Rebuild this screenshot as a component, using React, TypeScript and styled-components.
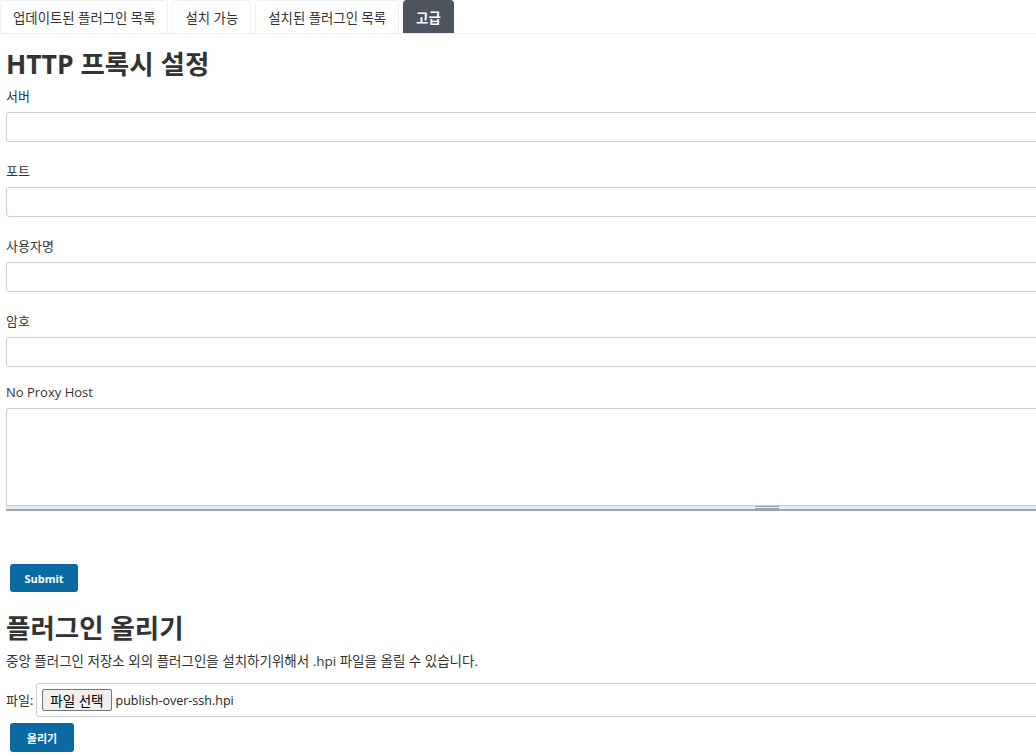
import React from "react";
import styled, { createGlobalStyle } from "styled-components";

const Global = createGlobalStyle`
  html, body { margin: 0; padding: 0; background: #fff; overflow: hidden; }
  body {
    font-family: "Open Sans", "Noto Sans CJK KR", sans-serif;
    color: #333;
    font-size: 13px;
  }
  * { box-sizing: border-box; }
`;

const Tabs = styled.div`
  display: flex;
  gap: 4px;
  height: 34px;
  border-bottom: 1px solid #eceef0;
`;

const Tab = styled.div<{ $active?: boolean }>`
  display: flex;
  align-items: center;
  justify-content: center;
  height: 33px;
  padding: 0 12px;
  font-size: 13.4px;
  border: 1px solid ${(p) => (p.$active ? "#4d545d" : "#eef0f2")};
  border-bottom: none;
  border-radius: 4px 4px 0 0;
  background: ${(p) => (p.$active ? "#4d545d" : "#fff")};
  color: ${(p) => (p.$active ? "#fff" : "#333")};
  font-weight: ${(p) => (p.$active ? 700 : 400)};
  white-space: nowrap;
`;

const Content = styled.div`
  padding: 0 0 0 6px;
`;

const Heading = styled.h1<{ $top: number }>`
  margin: ${(p) => p.$top}px 0 0;
  font-size: 26.5px;
  line-height: 31px;
  font-weight: 700;
  color: #333;
`;

const Field = styled.div<{ $mb?: number }>`
  display: flex;
  flex-direction: column;
  gap: 7px;
  margin-bottom: ${(p) => (p.$mb ?? 20)}px;
`;

const Label = styled.label`
  font-size: 13px;
  line-height: 18px;
  color: #333;
  white-space: nowrap;
`;

const FirstLabelWrap = styled.div`
  margin-top: 7px;
`;

const TextInput = styled.input`
  width: 1100px;
  height: 30px;
  border: 1px solid #cccccc;
  border-radius: 3px;
  background: #fff;
  font-family: inherit;
  font-size: 13px;
  padding: 0 6px;
  outline: none;
`;

const AreaWrap = styled.div`
  width: 1100px;
  display: flex;
  flex-direction: column;
`;

const TextArea = styled.textarea`
  width: 100%;
  height: 97px;
  border: 1px solid #cccccc;
  border-bottom: none;
  border-radius: 3px 3px 0 0;
  resize: none;
  font-family: inherit;
  outline: none;
  display: block;
`;

const Resizer = styled.div`
  position: relative;
  height: 6px;
  background: #e6ecef;
  border-top: 1px solid #cccccc;
  border-bottom: 2px solid #9aa7ad;
`;

const Grip = styled.div`
  position: absolute;
  left: 749px;
  top: 0;
  width: 24px;
  height: 3px;
  border-top: 1px solid #9aa7ad;
  border-bottom: 1px solid #9aa7ad;
`;

const PrimaryButton = styled.button<{ $w: number; $h: number; $top: number }>`
  display: block;
  margin: ${(p) => p.$top}px 0 0 4px;
  width: ${(p) => p.$w}px;
  height: ${(p) => p.$h}px;
  background: #0b6aa2;
  border: none;
  border-radius: 3px;
  color: #fff;
  font-family: "Open Sans", "Noto Sans CJK KR", sans-serif;
  font-weight: 700;
  font-size: 11px;
  padding: 0;
`;

const Description = styled.p`
  margin: 8px 0 0;
  font-size: 13.5px;
  line-height: 18px;
  color: #333;
`;

const FileRow = styled.div`
  display: flex;
  align-items: center;
  gap: 3px;
  margin-top: 13px;
`;

const FileBox = styled.div`
  flex: none;
  display: flex;
  align-items: center;
  gap: 4px;
  width: 1100px;
  height: 34px;
  border: 1px solid #cccccc;
  border-radius: 3px;
  padding: 0 5px;
  font-size: 13px;
`;

const FileButton = styled.span`
  display: inline-flex;
  align-items: center;
  justify-content: center;
  height: 22px;
  padding: 0 7px;
  background: #efefef;
  border: 1px solid #767676;
  border-radius: 2px;
  font-size: 13.5px;
  color: #000;
`;

const FileName = styled.span`
  color: #222;
  font-size: 12.5px;
`;

export default function App() {
  const fields = ["포트", "사용자명", "암호"];
  return (
    <>
      <Global />
      <Tabs>
        <Tab>업데이트된 플러그인 목록</Tab>
        <Tab>설치 가능</Tab>
        <Tab>설치된 플러그인 목록</Tab>
        <Tab $active>고급</Tab>
      </Tabs>
      <Content>
        <Heading $top={15}>HTTP 프록시 설정</Heading>
        <FirstLabelWrap>
          <Field>
            <Label>서버</Label>
            <TextInput />
          </Field>
        </FirstLabelWrap>
        {fields.map((f) => (
          <Field key={f} $mb={f === "암호" ? 16 : 20}>
            <Label>{f}</Label>
            <TextInput type={f === "암호" ? "password" : "text"} />
          </Field>
        ))}
        <Field $mb={0}>
          <Label>No Proxy Host</Label>
          <AreaWrap>
            <TextArea />
            <Resizer>
              <Grip />
            </Resizer>
          </AreaWrap>
        </Field>
        <PrimaryButton $w={68} $h={28} $top={53}>
          Submit
        </PrimaryButton>
        <Heading $top={21}>플러그인 올리기</Heading>
        <Description>
          중앙 플러그인 저장소 외의 플러그인을 설치하기위해서 .hpi 파일을 올릴 수 있습니다.
        </Description>
        <FileRow>
          <Label>파일:</Label>
          <FileBox>
            <FileButton>파일 선택</FileButton>
            <FileName>publish-over-ssh.hpi</FileName>
          </FileBox>
        </FileRow>
        <PrimaryButton $w={64} $h={29} $top={6}>
          올리기
        </PrimaryButton>
      </Content>
    </>
  );
}
